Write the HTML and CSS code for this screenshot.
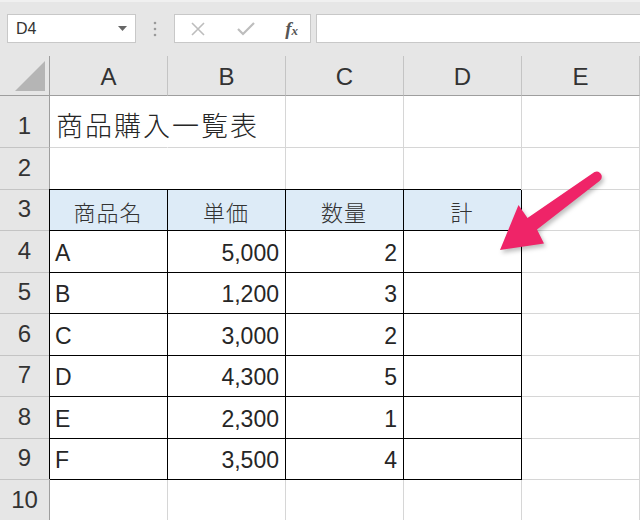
FILE: index.html
```html
<!DOCTYPE html>
<html lang="ja">
<head>
    <meta charset="UTF-8">
    <meta name="viewport" content="width=device-width, initial-scale=1.0">
    <title>商品購入一覧表</title>
    <link rel="stylesheet" href="styles.css">
</head>
<body>
    <div class="toolbar">
        <div class="name-box">
            <span>D4</span>
            <svg class="drop" width="9" height="5" viewBox="0 0 9 5"><path d="M0 0h9L4.5 5z" fill="#666"/></svg>
        </div>
        <svg class="grip" width="4" height="16" viewBox="0 0 4 16">
            <circle cx="2" cy="2" r="1.3" fill="#9a9a9a"/>
            <circle cx="2" cy="8" r="1.3" fill="#9a9a9a"/>
            <circle cx="2" cy="14" r="1.3" fill="#9a9a9a"/>
        </svg>
        <div class="fx-box">
            <svg width="16" height="16" viewBox="0 0 16 16"><path d="M2 2l12 12M14 2L2 14" stroke="#bdbdbd" stroke-width="1.6"/></svg>
            <svg width="18" height="16" viewBox="0 0 18 16"><path d="M1 8l5 5L17 2" stroke="#bdbdbd" stroke-width="2.2" fill="none"/></svg>
            <span class="fx">f<small>x</small></span>
        </div>
        <div class="formula"></div>
    </div>

    <div class="sheet">
        <div class="corner"><svg width="30" height="30" viewBox="0 0 30 30"><path d="M0 30L30 0v30z" fill="#b5b5b5"/></svg></div>
        <div class="col-head">A</div>
        <div class="col-head">B</div>
        <div class="col-head">C</div>
        <div class="col-head">D</div>
        <div class="col-head">E</div>

        <div class="row-head">1</div>
        <div class="cell title">商品購入一覧表</div>
        <div class="cell"></div>
        <div class="cell"></div>
        <div class="cell"></div>
        <div class="cell"></div>

        <div class="row-head">2</div>
        <div class="cell no-right"></div>
        <div class="cell"></div>
        <div class="cell"></div>
        <div class="cell"></div>
        <div class="cell"></div>

        <div class="row-head">3</div>
        <div class="cell tbl th">商品名</div>
        <div class="cell tbl th">単価</div>
        <div class="cell tbl th">数量</div>
        <div class="cell tbl th">計</div>
        <div class="cell"></div>

        <div class="row-head">4</div>
        <div class="cell tbl">A</div>
        <div class="cell tbl num">5,000</div>
        <div class="cell tbl num">2</div>
        <div class="cell tbl"></div>
        <div class="cell"></div>

        <div class="row-head">5</div>
        <div class="cell tbl">B</div>
        <div class="cell tbl num">1,200</div>
        <div class="cell tbl num">3</div>
        <div class="cell tbl"></div>
        <div class="cell"></div>

        <div class="row-head">6</div>
        <div class="cell tbl">C</div>
        <div class="cell tbl num">3,000</div>
        <div class="cell tbl num">2</div>
        <div class="cell tbl"></div>
        <div class="cell"></div>

        <div class="row-head">7</div>
        <div class="cell tbl">D</div>
        <div class="cell tbl num">4,300</div>
        <div class="cell tbl num">5</div>
        <div class="cell tbl"></div>
        <div class="cell"></div>

        <div class="row-head">8</div>
        <div class="cell tbl">E</div>
        <div class="cell tbl num">2,300</div>
        <div class="cell tbl num">1</div>
        <div class="cell tbl"></div>
        <div class="cell"></div>

        <div class="row-head">9</div>
        <div class="cell tbl">F</div>
        <div class="cell tbl num">3,500</div>
        <div class="cell tbl num">4</div>
        <div class="cell tbl"></div>
        <div class="cell"></div>

        <div class="row-head">10</div>
        <div class="cell"></div>
        <div class="cell"></div>
        <div class="cell"></div>
        <div class="cell"></div>
        <div class="cell"></div>

        <svg class="arrow" width="640" height="520" viewBox="0 0 640 520">
            <path d="M594.5 172Q599 170 601.5 175Q602.5 179 599.5 181L537 229.5L544 243.5L500 250L518.5 205L527.5 218Z" fill="#ef2468"/>
        </svg>
    </div>
</body>
</html>
```

FILE: styles.css
```css
body {
    margin: 0;
    padding: 0;
    width: 640px;
    height: 520px;
    overflow: hidden;
    background-color: #fff;
    font-family: "Liberation Sans", "Noto Sans CJK JP", sans-serif;
    color: #262626;
}

.toolbar {
    height: 56px;
    box-sizing: border-box;
    background-color: #e6e6e6;
    border-top: 2px solid #f0f0f0;
    padding: 12px 0 0 7px;
    display: flex;
    align-items: flex-start;
}

.name-box {
    width: 129px;
    height: 29px;
    box-sizing: border-box;
    background-color: #fff;
    border: 1px solid #c8c8c8;
    display: flex;
    align-items: center;
    justify-content: space-between;
    padding: 0 8px 0 8px;
    font-size: 16px;
    color: #333;
}

.grip {
    margin: 7px 17px 0 17px;
}

.fx-box {
    width: 137px;
    height: 29px;
    box-sizing: border-box;
    background-color: #fff;
    border: 1px solid #c8c8c8;
    display: flex;
    align-items: center;
    padding: 0 12px 0 15px;
    justify-content: space-between;
}

.fx {
    font-family: "Liberation Serif", serif;
    font-style: italic;
    font-weight: bold;
    font-size: 19px;
    color: #555;
}

.fx small {
    font-size: 13px;
}

.formula {
    flex: 1;
    height: 29px;
    box-sizing: border-box;
    margin-left: 5px;
    background-color: #fff;
    border: 1px solid #c8c8c8;
    border-right: none;
}

.sheet {
    position: relative;
    display: grid;
    grid-template-columns: 50px 118px 118px 118px 118px 118px;
    grid-template-rows: 40px 52px 42px repeat(7, 41.43px) 42px;
}

.corner,
.col-head,
.row-head {
    background-color: #e6e6e6;
    color: #333;
    box-sizing: border-box;
    display: flex;
    align-items: center;
    justify-content: center;
    font-size: 24px;
}

.corner {
    border-right: 1px solid #9e9e9e;
    border-bottom: 1px solid #9e9e9e;
    justify-content: flex-end;
    align-items: flex-end;
    padding: 0 4px 4px 0;
}

.col-head {
    border-right: 1px solid #c4c4c4;
    border-bottom: 1px solid #9e9e9e;
    padding-top: 3px;
}

.row-head {
    border-right: 1px solid #9e9e9e;
    border-bottom: 1px solid #c4c4c4;
    align-items: flex-end;
    padding-bottom: 7px;
}

.cell {
    box-sizing: border-box;
    border-right: 1px solid #d6d6d6;
    border-bottom: 1px solid #d6d6d6;
    display: flex;
    align-items: flex-end;
    padding: 0 6px 7px 5px;
    font-size: 23px;
    line-height: 1;
    white-space: nowrap;
}

.no-right {
    border-right: none;
}

.title {
    font-family: "Noto Sans CJK JP", sans-serif;
    font-weight: 300;
    font-size: 27px;
    letter-spacing: 2px;
    padding-bottom: 9px;
    padding-left: 6px;
    border-right-color: transparent;
}

.tbl {
    border-right: 1px solid #000;
    border-bottom: 1px solid #000;
    box-shadow: -1px -1px 0 #000;
}

.th {
    background-color: #ddebf7;
    justify-content: center;
    font-family: "Noto Sans CJK JP", sans-serif;
    font-weight: 300;
    font-size: 22px;
    letter-spacing: 1px;
    padding-bottom: 8px;
    color: #333;
}

.num {
    justify-content: flex-end;
}

.arrow {
    position: absolute;
    left: 0;
    top: -56px;
    pointer-events: none;
    filter: drop-shadow(2px 3px 2px rgba(0, 0, 0, 0.25));
}
```
